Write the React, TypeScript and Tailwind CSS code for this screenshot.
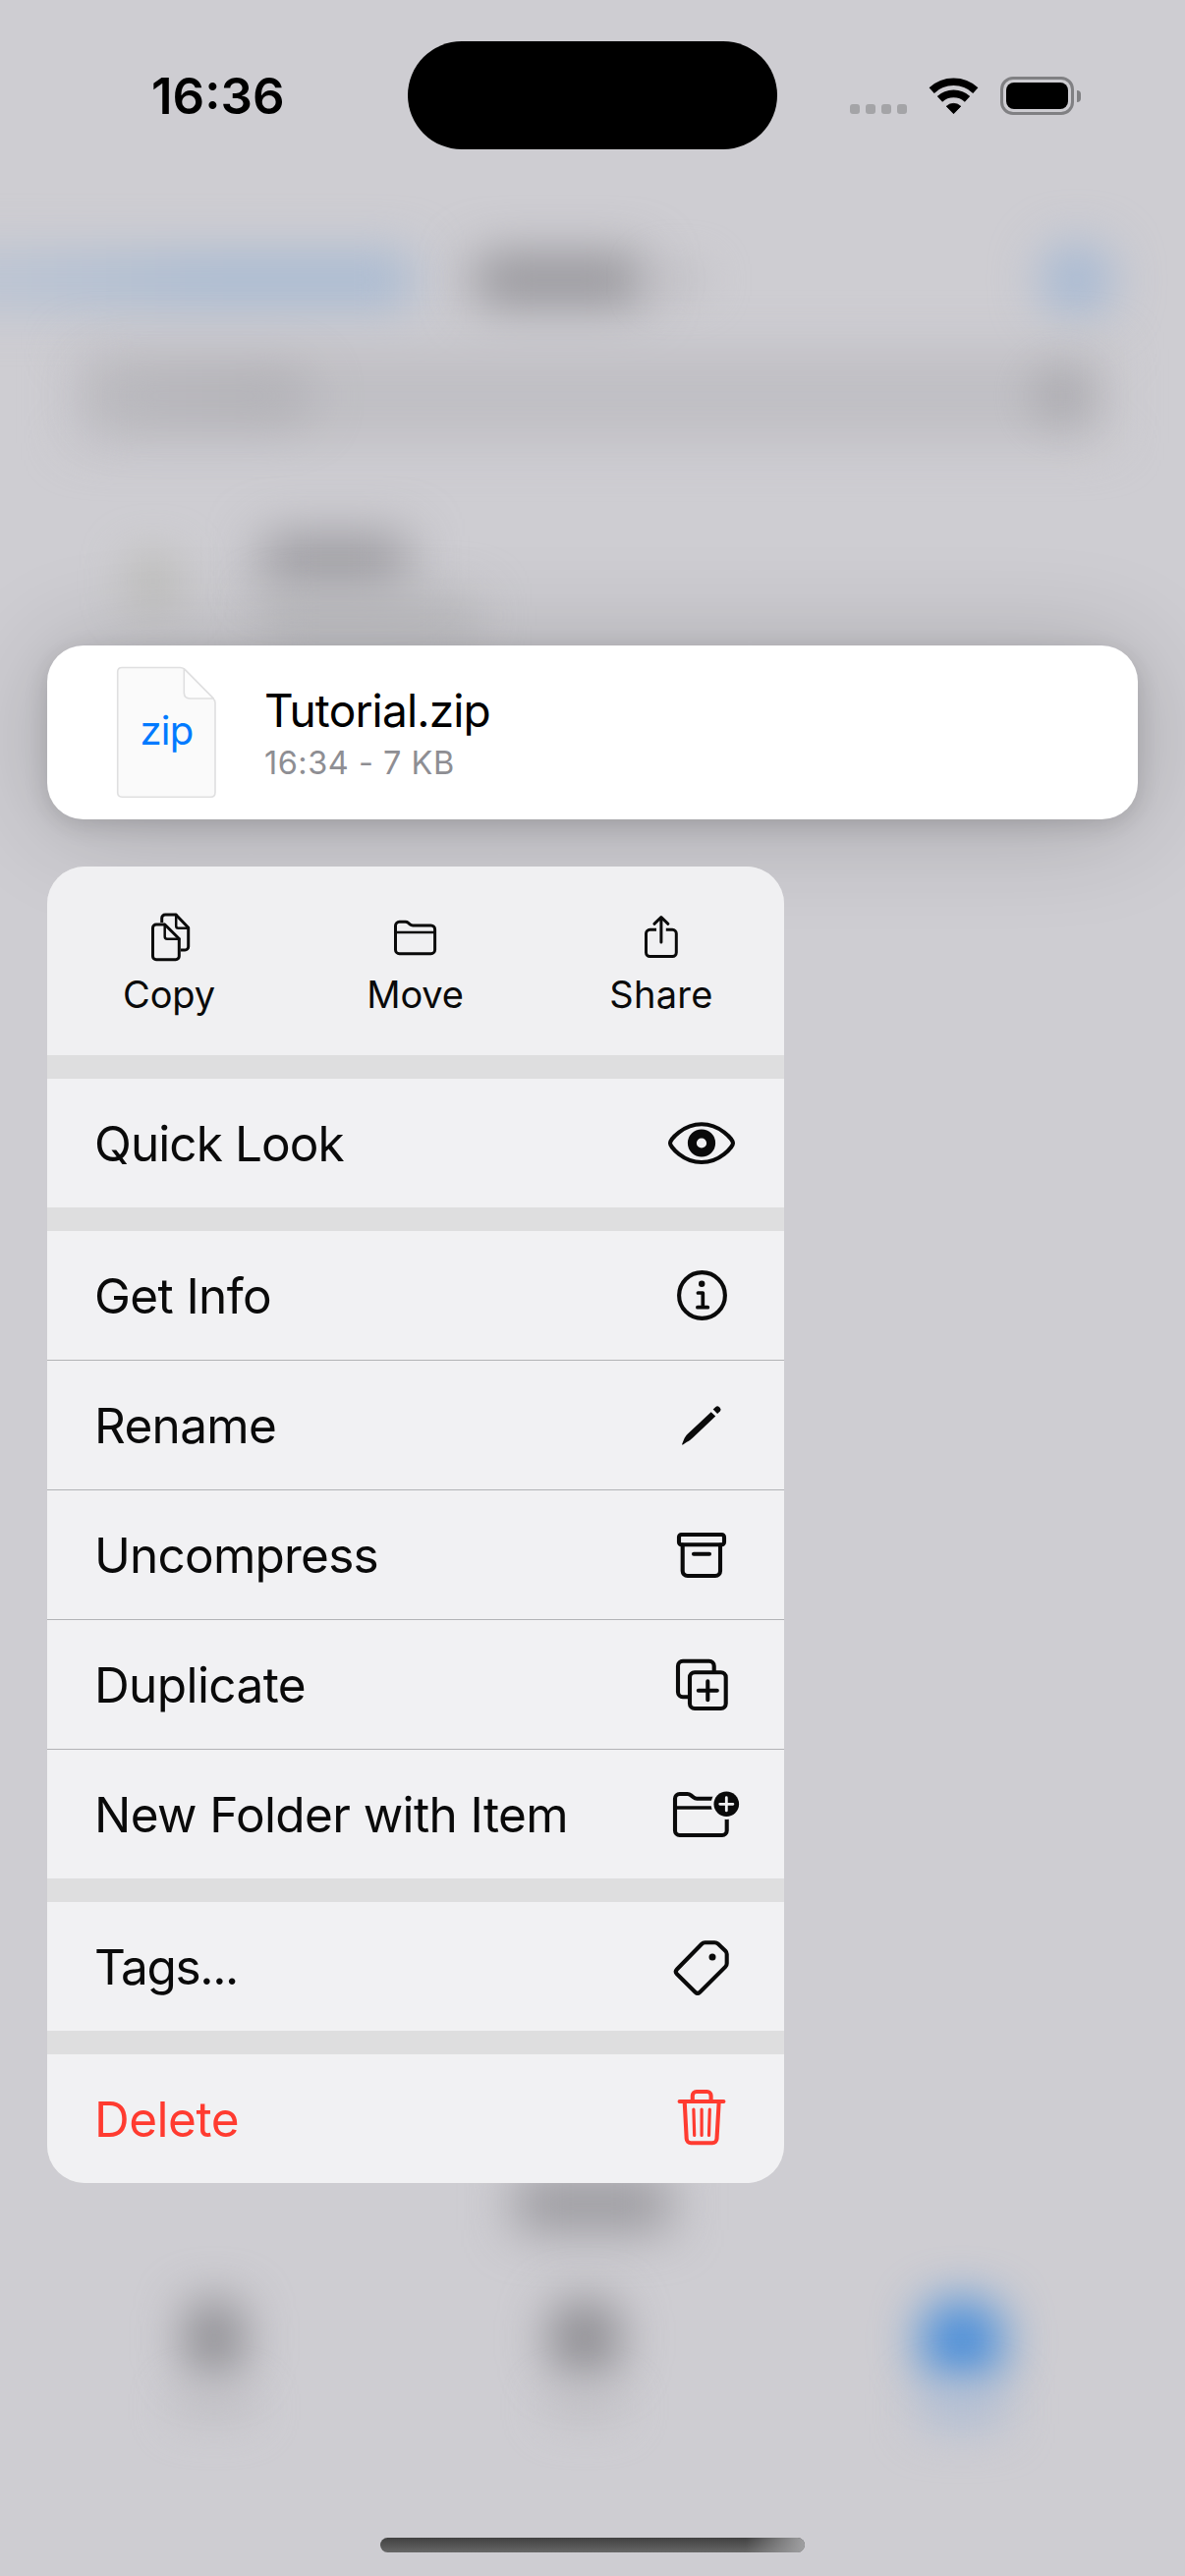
import type { ReactNode } from 'react';

/* ---------- Icons ---------- */

function ActionIcon({ children }: { children: ReactNode }) {
  return (
    <svg width="60" height="60" viewBox="0 0 60 60" fill="none" stroke="currentColor" strokeWidth="3" strokeLinecap="round" strokeLinejoin="round">
      {children}
    </svg>
  );
}

function RowIcon({ children }: { children: ReactNode }) {
  return (
    <svg width="80" height="81" viewBox="0 0 80 81" fill="none" stroke="currentColor" strokeWidth="4.1" strokeLinecap="round" strokeLinejoin="round">
      {children}
    </svg>
  );
}

const copyIcon = (
  <ActionIcon>
    <path d="M16 16H24.7L39.3 30.5V48.2a3.5 3.5 0 0 1-3.5 3.5H16a3.5 3.5 0 0 1-3.5-3.5V19.5A3.5 3.5 0 0 1 16 16z" />
    <path d="M24.7 16V28.2a2.5 2.5 0 0 0 2.5 2.5H39.3" strokeWidth="2.5" />
    <path d="M21.7 14V9.5A3.5 3.5 0 0 1 25.2 6H36L48.7 19.3V38.5a3.5 3.5 0 0 1-3.5 3.5H41" strokeLinecap="butt" />
    <path d="M36.2 6V17.5a2.3 2.3 0 0 0 2.3 2.3H48.7" strokeWidth="2.5" />
  </ActionIcon>
);

const folderIcon = (
  <ActionIcon>
    <path d="M9.5 41.7V17.3a4 4 0 0 1 4-4h6c1.3 0 2.2.4 3 1.1l1.7 1.5c.8.7 1.7 1.1 3 1.1H45.6a4 4 0 0 1 4 4V41.7a4 4 0 0 1-4 4H13.5a4 4 0 0 1-4-4z" />
    <path d="M9.5 24H49.6" strokeWidth="2.5" />
  </ActionIcon>
);

const shareIcon = (
  <ActionIcon>
    <path d="M25 21.3H18.5a4 4 0 0 0-4 4V44.6a4 4 0 0 0 4 4H41.3a4 4 0 0 0 4-4V25.3a4 4 0 0 0-4-4H34.8" strokeLinecap="butt" />
    <path d="M29.9 34V8.8M22.9 15.3L29.9 8.5L36.9 15.3" />
  </ActionIcon>
);

const eyeIcon = (
  <RowIcon>
    <path d="M8 40.5C8 37 21 21.2 40 21.2S72 37 72 40.5S59 60 40 60S8 44 8 40.5z" />
    <circle cx="40" cy="40.5" r="9.6" strokeWidth="9" />
  </RowIcon>
);

const infoIcon = (
  <RowIcon>
    <circle cx="40.5" cy="40.5" r="23.4" />
    <circle cx="40.2" cy="28.7" r="3.2" fill="currentColor" stroke="none" />
    <path d="M36.4 38H41.3V52.7M35.9 52.7H46.3" strokeWidth="3.7" />
  </RowIcon>
);

const pencilIcon = (
  <RowIcon>
    <g fill="currentColor" stroke="none">
      <path d="M49.7 27.3L54.2 31.4L31 53.5c-2 1.9-3.8 3.2-6 4.2l-4 2.8c-.7.4-1.1 0-.8-.7l1.9-4.7c.9-2.1 2-3.7 3.8-5.5z" />
      <path d="M51.7 24.6l2.7-2.6a2.5 2.5 0 0 1 3.4 0l1 1a2.5 2.5 0 0 1 0 3.5l-2.7 2.6z" />
    </g>
  </RowIcon>
);

const archiveIcon = (
  <RowIcon>
    <rect x="17" y="20" width="46" height="10.2" rx="2.5" />
    <path d="M20.7 30.5V57a5 5 0 0 0 5 5H54a5 5 0 0 0 5-5V30.5M32 39.7H48" />
  </RowIcon>
);

const duplicateIcon = (
  <RowIcon>
    <rect x="28" y="28.3" width="36.7" height="36.7" rx="5" />
    <path d="M27 53.3H21a5 5 0 0 1-5-5V21.7a5 5 0 0 1 5-5H47.7a5 5 0 0 1 5 5V27" strokeLinecap="butt" />
    <path d="M46.3 37.2V56.2M36.8 46.7H55.8" />
  </RowIcon>
);

const folderPlusIcon = (
  <RowIcon>
    <path d="M13 57.3V24.7a4.7 4.7 0 0 1 4.7-4.7H25.5c1.5 0 2.6.4 3.7 1.3l2.4 2c1.1.9 2.2 1.4 3.7 1.4H61a4.7 4.7 0 0 1 4.7 4.7V57.3a4.7 4.7 0 0 1-4.7 4.7H17.7a4.7 4.7 0 0 1-4.7-4.7z" />
    <path d="M13 34H62" strokeWidth="3.6" />
    <circle cx="65.3" cy="30.3" r="15.7" fill="#f1f1f3" stroke="none" />
    <circle cx="65.3" cy="30.3" r="12.8" fill="currentColor" stroke="none" />
    <path d="M65.3 23.7V36.9M58.7 30.3H71.9" stroke="#f1f1f3" strokeWidth="2.8" />
  </RowIcon>
);

const tagIcon = (
  <RowIcon>
    <path d="M43.5 16.3H53.3q2 0 3.4 1.3L64.3 24.7q1.4 1.4 1.4 3.3V37.5q0 2-1.4 3.4L38.3 66.8q-2.4 2.3-4.7 0L14.9 48.3q-2.3-2.4 0-4.8L40.1 17.7q1.4-1.4 3.4-1.4z" />
    <circle cx="51" cy="31" r="3.5" fill="currentColor" stroke="none" />
  </RowIcon>
);

const trashIcon = (
  <RowIcon>
    <path d="M17.6 23H62.4" />
    <path d="M30.8 23V17a4 4 0 0 1 4-4H45.6a4 4 0 0 1 4 4V23" />
    <path d="M22.7 23L24.7 61a4.5 4.5 0 0 0 4.5 4.3H51a4.5 4.5 0 0 0 4.5-4.3L57.7 23" />
    <path d="M31.9 31L32.7 57.5M40.1 31V57.5M48.3 31L47.5 57.5" strokeWidth="3.2" />
  </RowIcon>
);

/* ---------- Status bar ---------- */

function StatusBar() {
  return (
    <header className="grid h-[153px] grid-cols-[415px_376px_415px] pt-[42px]">
      <div className="flex items-center pl-[154px] text-[51px] leading-none font-semibold text-black">16:36</div>
      <div className="h-[110px] rounded-full bg-black" />
      <div className="flex items-end pb-[36px] pl-[74px]">
        <div className="mb-px flex gap-[6px]">
          {[0, 1, 2, 3].map((i) => (
            <span key={i} className="size-[10px] rounded-[3px] bg-[#a4a4a7]" />
          ))}
        </div>
        <svg className="ml-[17px]" width="61" height="47" viewBox="0 0 61 47" fill="none" stroke="#000">
          <path d="M8.2 22.1A32.7 32.7 0 0 1 52.8 22.1" strokeWidth="7.6" />
          <path d="M16.45 30.9A20.6 20.6 0 0 1 44.55 30.9" strokeWidth="7.8" />
          <path d="M30.5 45.7L23.2 38.2A10.8 10.8 0 0 1 37.8 38.2z" fill="#000" strokeWidth="0.8" strokeLinejoin="round" />
        </svg>
        <div className="ml-[17px] flex items-center">
          <div className="h-[39px] w-[75px] rounded-[13px] border-[3px] border-[#808083] p-[3px]">
            <div className="h-full w-full rounded-[8px] bg-black" />
          </div>
          <div className="ml-[3px] h-[12px] w-[4px] rounded-r-full bg-[#808083]" />
        </div>
      </div>
    </header>
  );
}

/* ---------- Blurred file browser behind the menu ---------- */

function Backdrop() {
  return (
    <div className="absolute inset-0 flex flex-col overflow-hidden bg-[#cecdd2]">
      <div className="mt-[245px] flex h-[80px] items-center">
        <div className="-ml-[80px] h-[56px] w-[500px] bg-linear-to-r from-[#b9c3d3] from-15% to-[#a8bad2] to-60% blur-[25px]" />
        <div className="ml-[62px] h-[50px] w-[174px] rounded-[10px] bg-[#919095] blur-[26px]" />
        <div className="ml-[4px] h-[36px] w-[62px] bg-[#bab9be] opacity-50 blur-[20px]" />
        <div className="ml-[337px] size-[74px] rounded-full bg-[#a4b8d3] blur-[25px]" />
      </div>
      <div className="mx-[76px] mt-[30px] h-[96px] bg-[#c0bfc4] blur-[25px]" />
      <div className="-mt-[78px] flex h-[60px] items-center justify-between pr-[98px] pl-[96px]">
        <div className="h-[50px] w-[220px] rounded-[20px] bg-linear-to-r from-[#b5b4b9] to-[#a8a7ac] opacity-75 blur-[27px]" />
        <div className="size-[56px] rounded-full bg-[#a3a2a7] opacity-80 blur-[23px]" />
      </div>
      <div className="mt-[112px] flex pl-[128px]">
        <div className="mt-[16px] h-[60px] w-[56px] bg-[#b8b8b1] opacity-60 blur-[23px]" />
        <div className="ml-[82px]">
          <div className="h-[50px] w-[150px] bg-[#99989d] blur-[26px]" />
          <div className="mt-[14px] h-[36px] w-[220px] bg-[#b9b9bc] blur-[25px]" />
        </div>
      </div>
      <div className="mt-[1571px] flex justify-center">
        <div className="h-[54px] w-[158px] bg-[#98979c] blur-[25px]" />
      </div>
      <div className="mt-[71px] flex">
        <div className="flex w-[439px] flex-col items-center">
          <div className="h-[78px] w-[60px] rounded-[20px] bg-[#8f8e93] blur-[24px]" />
          <div className="mt-[14px] h-[34px] w-[84px] bg-[#bdbcc1] opacity-70 blur-[22px]" />
        </div>
        <div className="flex w-[318px] flex-col items-center">
          <div className="h-[78px] w-[72px] rounded-[24px] bg-[#8f8e93] blur-[24px]" />
          <div className="mt-[14px] h-[34px] w-[80px] bg-[#bdbcc1] opacity-70 blur-[22px]" />
        </div>
        <div className="flex w-[456px] flex-col items-center">
          <div className="h-[84px] w-[84px] rounded-[32px] bg-[#4a8ed9] blur-[24px]" />
          <div className="mt-[8px] h-[38px] w-[84px] bg-[#afbdd4] blur-[24px]" />
        </div>
      </div>
    </div>
  );
}

/* ---------- File preview ---------- */

function FilePreview() {
  return (
    <section className="mx-[48px] mt-[504px] flex h-[177px] items-center rounded-[37px] bg-white pl-[70px] shadow-[0_6px_110px_rgba(0,0,0,0.2),0_6px_24px_rgba(0,0,0,0.13)]">
      <div className="relative h-[135px] w-[102px]">
        <svg width="102" height="135" viewBox="0 0 102 135" fill="none" stroke="#dfdfe0" strokeWidth="1.6">
          <path d="M6 1.5H65.5Q68.5 1.5 70.5 3.8L98.5 32.2Q101 34.8 101 37.5V128.5Q101 133.2 96.3 133.2H6.2Q1.7 133.2 1.7 128.5V6Q1.7 1.5 6 1.5z" fill="#fafafa" />
          <path d="M69.3 2.8V27Q69.3 33 75.3 33H99.3z" fill="#fdfdfd" strokeLinejoin="round" />
        </svg>
        <span className="absolute inset-0 flex items-center justify-center pb-[3px] pl-px text-[40px] leading-none tracking-[-0.8px] text-[#007aff]">zip</span>
      </div>
      <div className="ml-[49px]">
        <h1 className="text-[46px] leading-[56px] tracking-[-0.82px] text-black">Tutorial.zip</h1>
        <p className="mt-[6px] text-[32.5px] leading-[40px] tracking-[0.5px] text-[#8e8e93]">16:34 - 7 KB</p>
      </div>
    </section>
  );
}

/* ---------- Context menu ---------- */

type Row = { label: string; tracking: string; icon: ReactNode; danger?: boolean };

const actions = [
  { label: 'Copy', tracking: 'tracking-[-0.1px] -ml-[2px]', icon: copyIcon },
  { label: 'Move', tracking: 'tracking-[-0.13px] -ml-px', icon: folderIcon },
  { label: 'Share', tracking: 'tracking-[0.28px]', icon: shareIcon },
];

const groups: Row[][] = [
  [{ label: 'Quick Look', tracking: 'tracking-[-0.92px]', icon: eyeIcon }],
  [
    { label: 'Get Info', tracking: 'tracking-[-0.62px]', icon: infoIcon },
    { label: 'Rename', tracking: 'tracking-[-0.7px]', icon: pencilIcon },
    { label: 'Uncompress', tracking: 'tracking-[-0.78px]', icon: archiveIcon },
    { label: 'Duplicate', tracking: 'tracking-[-0.6px]', icon: duplicateIcon },
    { label: 'New Folder with Item', tracking: 'tracking-[-0.61px]', icon: folderPlusIcon },
  ],
  [{ label: 'Tags...', tracking: 'tracking-[-1.34px]', icon: tagIcon }],
  [{ label: 'Delete', tracking: 'tracking-[-0.5px]', icon: trashIcon, danger: true }],
];

function ContextMenu() {
  return (
    <nav className="mt-[48px] ml-[48px] flex w-[750px] flex-col gap-[24px] overflow-hidden rounded-[38px] bg-[#dededf] text-[#0a0a0a]">
      <div className="grid h-[192px] grid-cols-3 bg-[#f0f0f2]">
        {actions.map((a) => (
          <button key={a.label} className="flex flex-col items-center pt-[43px]">
            {a.icon}
            <span className={`mt-[3px] text-[38px] leading-[48px] ${a.tracking}`}>{a.label}</span>
          </button>
        ))}
      </div>
      {groups.map((rows) => (
        <ul key={rows[0].label} className="divide-y divide-[#b2b3b6] bg-[#f1f1f3]">
          {rows.map((r) => (
            <li key={r.label} className={r.danger ? 'text-[#ff3b30]' : ''}>
              <button className="flex h-[131px] w-full items-center justify-between pr-[44px] pl-[48px] text-left">
                <span className={`text-[49.5px] leading-[60px] whitespace-nowrap ${r.tracking}`}>{r.label}</span>
                {r.icon}
              </button>
            </li>
          ))}
        </ul>
      ))}
    </nav>
  );
}

export default function App() {
  return (
    <div className="relative h-[2622px] w-[1206px] overflow-hidden bg-[#cecdd2] font-['Inter',sans-serif]">
      <Backdrop />
      <main className="relative">
        <StatusBar />
        <FilePreview />
        <ContextMenu />
        <div className="mx-auto mt-[361px] h-[15px] w-[432px] overflow-hidden rounded-full bg-linear-to-b from-[#414141] to-[#676767]">
          <div className="ml-auto h-full w-[60px] bg-linear-to-r from-transparent to-[#a0a0a2]" />
        </div>
      </main>
    </div>
  );
}
